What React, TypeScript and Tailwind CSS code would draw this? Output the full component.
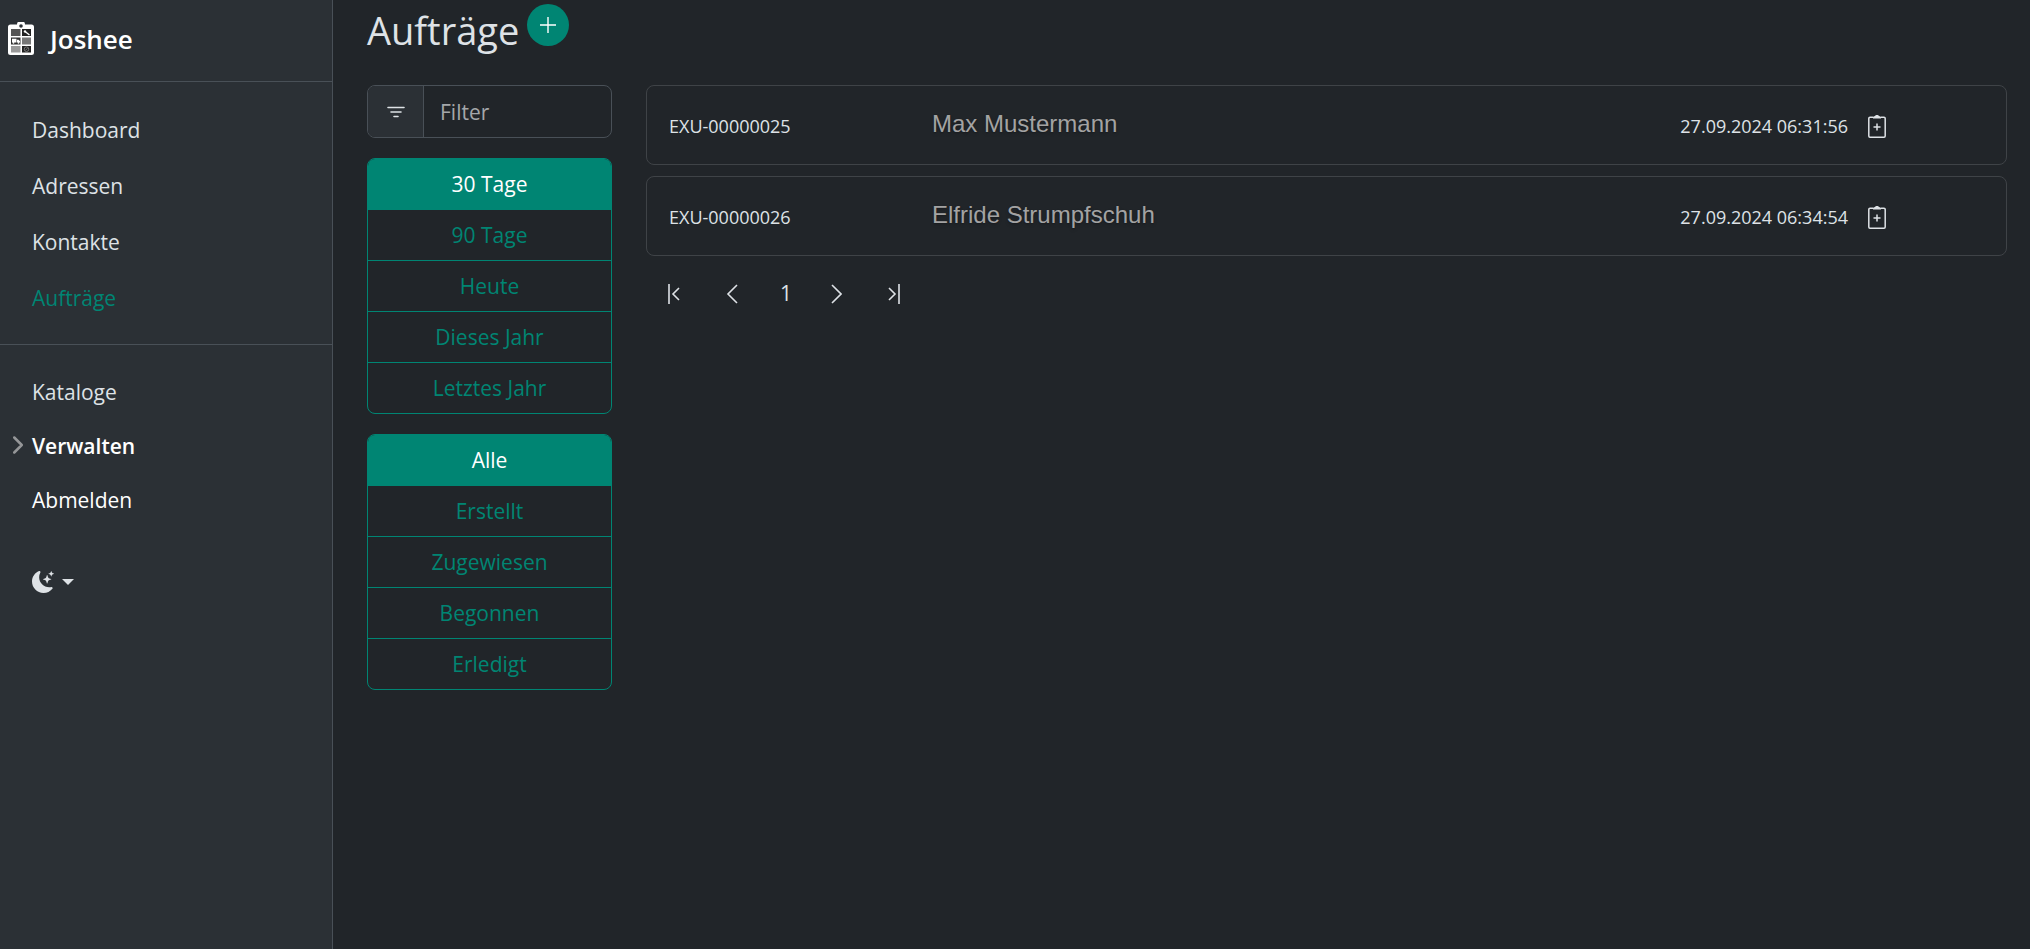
import { useState } from 'react';
import { BsChevronRight, BsMoonStarsFill } from 'react-icons/bs';

interface Order {
    id: string;
    name: string;
    createdAt: string;
}

interface FilterGroupProps {
    label: string;
    options: string[];
    value: string;
    onChange: (value: string) => void;
}

const orders: Order[] = [
    { id: 'EXU-00000025', name: 'Max Mustermann', createdAt: '27.09.2024 06:31:56' },
    { id: 'EXU-00000026', name: 'Elfride Strumpfschuh', createdAt: '27.09.2024 06:34:54' },
];

const periods = ['30 Tage', '90 Tage', 'Heute', 'Dieses Jahr', 'Letztes Jahr'];
const states = ['Alle', 'Erstellt', 'Zugewiesen', 'Begonnen', 'Erledigt'];

const Logo = () => (
    <svg viewBox="0 0 26 33" className="h-[33px] w-[26px] shrink-0" aria-hidden="true">
        <path fill="#fff" d="M2.500 2.500H9A4 3.500 0 0 1 17 2.500h6.500A2.500 2.500 0 0 1 26 5v25.500a2.500 2.500 0 0 1-2.500 2.500h-21A2.500 2.500 0 0 1 0 30.500V5a2.500 2.500 0 0 1 2.500-2.500z" />
        <circle cx="13" cy="4" r="1.800" fill="#2b3035" />
        <path fill="#555" d="M3 7h9.500v7H3z" />
        <path fill="#222" d="M14 7h9v7h-9z" />
        <path fill="#333" d="M3 15.500h9.500v7H3z" />
        <path fill="#777" d="M14 15.500h9v7h-9z" />
        <path fill="#999" d="M3 24h9.500v6.500H3z" />
        <path fill="#222" d="M14 24h9v6.500h-9z" />
        <path stroke="#fff" strokeWidth="1.300" d="M17 9.500l4.500 3.500" />
        <circle cx="17" cy="9.400" r="1.200" fill="#fff" />
        <path fill="#fff" d="M4 16.800h4.500v3.700H4zM9 17.800h1.600l1.400 1.500v1.200H9z" />
        <circle cx="5.500" cy="20.800" r=".9" fill="#fff" />
        <circle cx="10.500" cy="20.800" r=".9" fill="#fff" />
        <circle cx="18.500" cy="27.200" r="2.300" fill="none" stroke="#777" />
        <path stroke="#777" d="M17.500 28l2-1.500" />
    </svg>
);

const ClipboardPlus = () => (
    <svg viewBox="0 0 18 23" className="h-[23px] w-[18px]" fill="none" stroke="currentColor" aria-hidden="true">
        <path strokeWidth="1.500" d="M5 2.300H2a1.200 1.200 0 0 0-1.200 1.200V21A1.200 1.200 0 0 0 2 22.200h14a1.200 1.200 0 0 0 1.200-1.200V3.500A1.200 1.200 0 0 0 16 2.300h-3" />
        <path fill="currentColor" stroke="none" d="M5 3.500V2.300C5 1.500 6 1.300 7 1c.5-.6 1-1 2-1s1.500.4 2 1c1 .3 2 .5 2 1.300v1.200z" />
        <path strokeWidth="1.500" d="M9 8.500v7M5.500 12h7" />
    </svg>
);

const PageIcon = ({ d }: { d: string }) => (
    <svg viewBox="0 0 12 20" className="h-5 w-3" fill="none" stroke="currentColor" strokeWidth="1.600" aria-hidden="true">
        <path d={d} />
    </svg>
);

const FilterGroup = ({ label, options, value, onChange }: FilterGroupProps) => {
    return (
        <div role="group" aria-label={label} className="flex flex-col divide-y divide-[#008573] overflow-hidden rounded-lg border border-[#008573]">
            {options.map((option) => (
                <button
                    key={option}
                    onClick={() => onChange(option)}
                    aria-pressed={option === value}
                    className={`box-content h-12 pt-0.5 text-[21px] ${option === value ? 'bg-[#008573] text-white' : 'text-[#008573]'}`}
                >
                    {option}
                </button>
            ))}
        </div>
    );
};

const OrderRow = ({ order }: { order: Order }) => {
    return (
        <li className="flex h-20 items-center rounded-lg border border-[#3f4347] px-[22px] pt-0.5">
            <span className="w-[263px] text-lg">{order.id}</span>
            <span className="mb-1 flex-1 font-['Liberation_Sans'] text-2xl text-[#a3a3a3] text-shadow-md">{order.name}</span>
            <span className="mr-5 text-lg">{order.createdAt}</span>
            <button aria-label="Auftrag kopieren" className="mr-[98px]">
                <ClipboardPlus />
            </button>
        </li>
    );
};

const Sidebar = () => {
    return (
        <aside className="w-[333px] shrink-0 border-r border-[#495057] bg-[#2b3035] text-[21px] leading-7">
            <div className="flex h-[82px] items-center gap-4 border-b border-[#495057] pb-1 pl-2">
                <Logo />
                <span className="text-[26px] font-semibold text-white">Joshee</span>
            </div>
            <nav>
                <div className="flex flex-col border-b border-[#495057] pt-5 pb-[18px] pl-8">
                    <a href="#dashboard" className="py-3.5">Dashboard</a>
                    <a href="#adressen" className="py-3.5">Adressen</a>
                    <a href="#kontakte" className="py-3.5">Kontakte</a>
                    <a href="#auftraege" className="py-3.5 text-[#008573]">Aufträge</a>
                </div>
                <div className="flex flex-col py-5 pl-8">
                    <a href="#kataloge" className="py-[13px]">Kataloge</a>
                    <button className="relative py-[13px] text-left font-semibold text-white">
                        <BsChevronRight className="absolute top-4 -left-6 size-5 stroke-[#959698] stroke-1 text-[#959698]" />
                        Verwalten
                    </button>
                    <a href="#abmelden" className="py-[13px] text-white">Abmelden</a>
                </div>
            </nav>
            <button aria-label="Farbschema" className="mt-6 ml-8 flex items-center gap-2">
                <BsMoonStarsFill className="size-[22px]" />
                <svg viewBox="0 0 12 6" className="h-1.5 w-3" fill="currentColor" aria-hidden="true">
                    <path d="M0 0h12L6 6z" />
                </svg>
            </button>
        </aside>
    );
};

const App = () => {
    const [filter, setFilter] = useState('');
    const [period, setPeriod] = useState('30 Tage');
    const [state, setState] = useState('Alle');

    return (
        <div className="flex min-h-screen bg-[#212529] font-['Open_Sans',sans-serif] text-[#dee2e6]">
            <Sidebar />
            <main className="min-w-0 flex-1 pr-[23px] pl-[34px]">
                <div className="flex h-[85px] gap-2 pt-1">
                    <h1 className="text-[38px] leading-[52px]">Aufträge</h1>
                    <button aria-label="Neuer Auftrag" className="flex size-[42px] items-center justify-center rounded-full bg-[#008573] text-white">
                        <svg viewBox="0 0 16 16" className="size-4" fill="none" stroke="currentColor" strokeWidth="1.400" aria-hidden="true">
                            <path d="M8 0v16M0 8h16" />
                        </svg>
                    </button>
                </div>
                <div className="flex gap-[34px]">
                    <div className="flex w-[245px] shrink-0 flex-col gap-5">
                        <div className="flex h-[53px] overflow-hidden rounded-lg border border-[#495057]">
                            <label htmlFor="filter" aria-label="Filter" className="flex w-14 items-center justify-center border-r border-[#495057] bg-[#2b3035]">
                                <svg viewBox="0 0 18 12" className="h-3 w-[18px]" fill="none" stroke="currentColor" strokeWidth="1.600" strokeLinecap="round" aria-hidden="true">
                                    <path d="M1 1.500h16M4 6h10M7 10.500h4" />
                                </svg>
                            </label>
                            <input
                                id="filter"
                                value={filter}
                                onChange={(e) => setFilter(e.target.value)}
                                placeholder="Filter"
                                className="min-w-0 flex-1 px-4 pt-0.5 text-[21px] outline-none placeholder:text-[#a4a7aa]"
                            />
                        </div>
                        <FilterGroup label="Zeitraum" options={periods} value={period} onChange={setPeriod} />
                        <FilterGroup label="Status" options={states} value={state} onChange={setState} />
                    </div>
                    <div className="min-w-0 flex-1">
                        <ul className="flex flex-col gap-[11px]">
                            {orders.map((order) => (
                                <OrderRow key={order.id} order={order} />
                            ))}
                        </ul>
                        <div className="mt-4 flex h-11 items-center pl-[22px]">
                            <button aria-label="Erste Seite" className="w-[58px]">
                                <PageIcon d="M1 0v20M11 4l-6 6 6 6" />
                            </button>
                            <button aria-label="Vorherige Seite" className="w-[54px]">
                                <PageIcon d="M11 1l-9 9 9 9" />
                            </button>
                            <span className="w-[50px] text-[21px]">1</span>
                            <button aria-label="Nächste Seite" className="w-[58px]">
                                <PageIcon d="M2 1l9 9-9 9" />
                            </button>
                            <button aria-label="Letzte Seite">
                                <PageIcon d="M11 0v20M1 4l6 6-6 6" />
                            </button>
                        </div>
                    </div>
                </div>
            </main>
        </div>
    );
};

export default App;
